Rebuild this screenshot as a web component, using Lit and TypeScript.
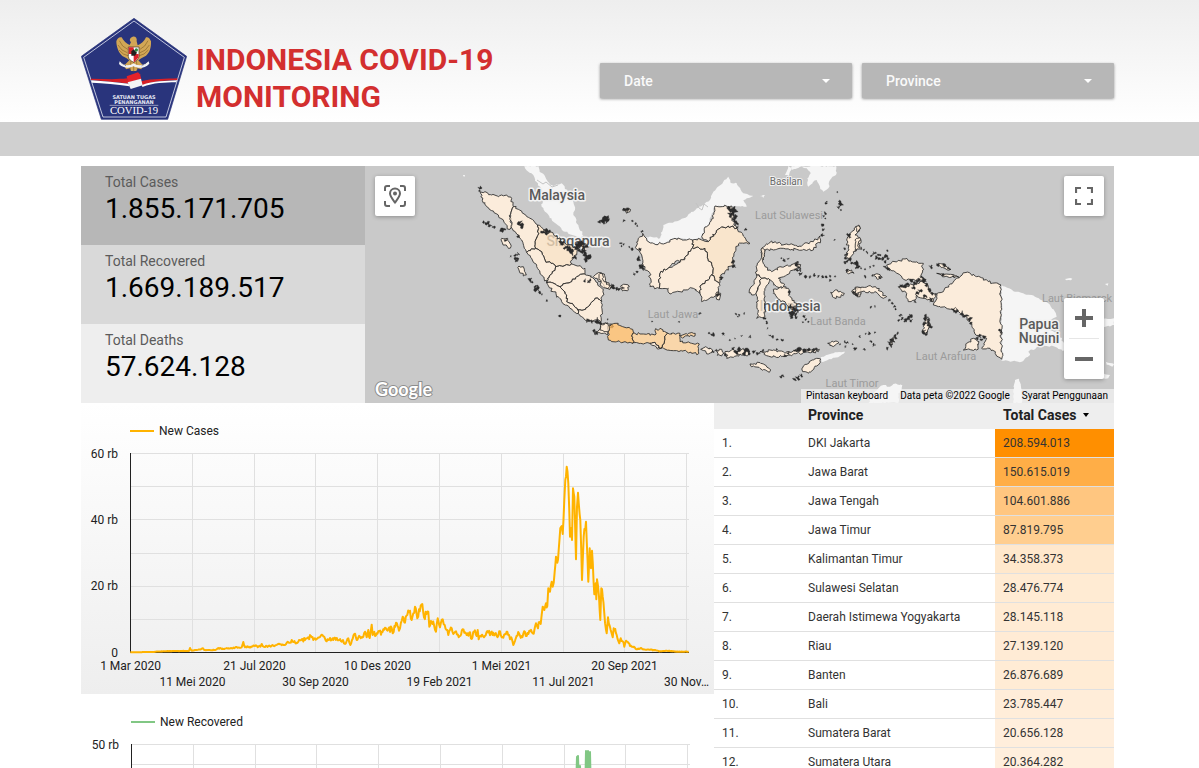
import { LitElement, html, svg, css } from "lit";
import { customElement } from "lit/decorators.js";

type Point = [number, number];

const parse = (source: string): Point[] =>
  source.trim().split(/\s+/).map((pair) => pair.split(",").map(Number) as Point);

const hash = (x: number, y: number): number => {
  const value = Math.sin(x * 12.9898 + y * 78.233) * 43758.5453;
  return value - Math.floor(value) - 0.5;
};

/** Turns a coarse outline into a jagged coastline; shared borders stay shared. */
const coast = (source: string, amount = 8): string => {
  const points = parse(source);
  const out: string[] = [];
  points.forEach(([x1, y1], i) => {
    const [x2, y2] = points[(i + 1) % points.length];
    const steps = Math.max(1, Math.round(Math.hypot(x2 - x1, y2 - y1) / 6));
    for (let s = 0; s < steps; s++) {
      const x = Math.round((x1 + ((x2 - x1) * s) / steps) * 10) / 10;
      const y = Math.round((y1 + ((y2 - y1) * s) / steps) * 10) / 10;
      const k = s === 0 ? 0 : amount;
      out.push(`${(x + hash(x, y) * k).toFixed(1)},${(y + hash(y, x) * k).toFixed(1)}`);
    }
  });
  return `M${out.join("L")}Z`;
};

/** Small islands: "x,y,r" triples become tiny irregular blots. */
const islets = (source: string): string =>
  source.trim().split(/\s+/).map((entry) => {
    const [x, y, r] = entry.split(",").map(Number);
    const pts: string[] = [];
    for (let i = 0; i < 9; i++) {
      const angle = (i / 9) * Math.PI * 2;
      const reach = r * (1 + hash(x + i, y - i) * 1.7);
      pts.push(`${(x + Math.cos(angle) * reach).toFixed(1)},${(y + Math.sin(angle) * reach).toFixed(1)}`);
    }
    return `M${pts.join("L")}Z`;
  }).join("");

interface Province { d: string; tone: string; }
interface Sheet { x: number; foreign: string[]; provinces: Province[]; islets: string; }

const P = "#fce8d2";
const p = (d: string, tone = P): Province => ({ d, tone });

const SHEETS: Sheet[] = [
  {
    x: 365,
    foreign: [
      "478,18 520,18 524,36 538,45 552,68 566,78 590,70 608,95 625,125 630,150 625,165 640,195 655,228 645,235 600,215 565,185 540,155 530,140 535,110 528,85 510,62 505,45 490,35",
      "294,45 300,45 299,50 295,49",
    ],
    provinces: [
      p("345,95 360,95 380,105 400,110 425,105 440,115 445,140 435,165 440,200 432,208 420,190 400,165 380,152 365,140 352,122"),
      p("445,140 460,148 490,172 518,195 522,220 512,240 512,265 485,277 478,265 470,240 455,222 440,205 435,165"),
      p("518,195 545,212 565,222 590,245 610,255 630,262 635,285 620,300 620,312 572,320 558,310 540,300 530,275 512,265 512,240 522,220", "#fadfbd"),
      p("485,277 512,265 530,275 540,300 558,310 572,320 562,340 548,355 545,368 530,345 515,315 500,295"),
      p("572,320 620,312 640,318 660,325 660,343 635,350 620,365 585,380 560,368 545,368 548,355 562,340"),
      p("585,380 620,365 635,350 660,343 690,360 705,380 715,388 710,425 690,415 675,435 655,450 638,450 625,435 605,425 605,405"),
      p("545,368 560,368 585,380 605,405 605,425 625,435 638,450 640,460 615,445 590,425 565,395"),
      p("638,450 655,450 675,435 690,415 710,425 708,485 695,480 680,480 665,487 650,470 640,460"),
      p("707,490 740,492 745,500 728,505 728,525 715,520 695,520 690,515 705,508"),
      p("410,235 428,235 438,260 430,265 412,248"),
      p("462,318 475,320 484,345 475,348 462,330"),
      p("685,350 700,338 718,342 722,365 740,378 735,388 718,382 708,365 690,355"),
    ],
    islets:
      "345,84,4 343,92,3 463,190,7 470,198,6 355,186,3 367,190,5 376,197,5 386,201,4 412,211,5 418,208,3 421,240,3 437,289,2 452,285,4 460,282,4 453,295,5 455,303,3 495,359,5 502,366,3 513,378,5 516,387,6 523,396,4 530,403,2 545,422,2 585,469,4 460,228,4 542,211,4 536,216,6 550,214,4 545,220,4 590,248,6 602,262,6 612,270,7 622,277,6 628,293,5 640,258,8 650,252,9 658,262,8 652,272,7 661,283,6 668,291,7 660,299,5 673,293,4 642,270,5 633,262,6 705,183,6 712,180,5 723,176,7 726,184,5 775,148,3 776,182,3 766,250,2 770,258,2 776,253,2 660,362,4 670,366,4 675,360,3 742,376,4 746,384,4 764,386,4 668,480,5 680,484,4 695,482,6 704,489,4 728,478,2 688,514,6 693,520,4 740,498,4",
  },
  {
    x: 600,
    foreign: [
      "135,230 180,235 190,195 240,180 280,155 330,120 340,95 370,65 385,50 395,70 410,70 430,100 460,108 430,120 440,140 400,138 345,138 320,200 305,230 285,240 225,235 190,252 160,250 140,240",
      "575,18 708,18 708,45 690,60 685,85 670,95 660,80 650,60 625,80 622,55 632,40 620,25 600,20 575,30",
      "555,45 565,18 575,22 566,48",
      "480,108 495,106 490,114", "662,592 700,580 735,575 720,588 665,606",
    ],
    provinces: [
      p("128,220 140,240 160,250 190,252 225,235 260,240 278,240 278,262 265,275 255,295 225,305 205,325 180,340 178,385 150,380 150,340 125,315 125,285 108,265 115,235"),
      p("178,385 180,340 205,325 255,295 265,275 278,262 315,265 325,300 340,325 335,345 325,360 300,378 300,400 280,385 255,390 240,395 210,402 205,385"),
      p("300,378 325,360 335,345 345,362 358,370 358,405 340,412 305,425 300,400"),
      p("278,240 295,235 325,245 360,205 385,198 410,205 415,215 430,228 450,250 415,252 402,280 400,310 375,335 362,345 360,368 345,362 335,345 340,325 325,300 315,265 278,262", "#fadfbd"),
      p("345,138 395,138 400,170 395,180 410,205 385,198 360,205 325,245 305,230 320,200 340,175"),
      p("352,395 362,400 358,420 350,418"),
      p("22,497 45,490 68,500 98,508 98,550 75,545 50,545 25,540", "#fbb65c"),
      p("98,520 130,522 165,525 165,512 180,505 200,518 195,540 182,565 165,547 150,550 130,552 98,550", "#fac888"),
      p("150,550 165,547 182,565 175,567"),
      p("200,518 240,520 240,545 275,550 298,552 295,582 260,575 220,572 182,565 195,540", "#facb90"),
      p("238,525 280,520 285,528 245,532", "#facb90"),
      p("0,492 22,492 28,503 22,515 0,510"),
      p("302,568 320,562 338,570 325,582"),
      p("350,572 365,568 372,580 365,588 352,586"),
      p("375,575 395,570 412,575 430,565 450,575 445,585 420,582 400,592 380,595"),
      p("480,575 520,570 555,580 580,573 620,568 658,568 655,575 610,577 545,590 500,587"),
      p("450,612 480,608 512,630 508,637 480,625 455,620"),
      p("610,618 650,595 662,597 655,615 625,640 608,635"),
      p("485,265 515,243 530,250 600,258 640,245 660,228 662,240 640,270 610,268 530,268 495,270 490,290 490,300"),
      p("485,265 495,270 488,300 495,320 515,335 540,320 565,318 595,305 600,322 580,330 560,345 535,355 550,370 555,385 530,380 510,360 485,355 470,345 472,315 485,285"),
      p("470,345 485,355 475,380 468,400 455,405 448,390 460,375"),
      p("485,355 510,360 505,372 495,385 495,470 470,475 475,450 472,410 468,400 475,380"),
      p("520,388 550,380 565,385 570,410 590,430 588,445 565,440 555,425 535,418 520,400"),
      p("62,378 75,373 88,380 85,390 68,393"),
      p("0,340 8,345 12,365 30,378 24,386 8,382 0,375"),
      p("75,148 86,145 90,155 80,160"),
      p("692,397 712,390 733,400 722,412 700,412"),
      p("738,330 755,330 762,340 745,342"),
      p("683,550 700,546 717,548 705,556 690,557"),
      p("755,215 768,200 780,200 780,212 765,225 780,235 780,260 760,275 750,300 738,290 745,265 740,240"),
      p("755,395 780,382 780,410 765,405"),
    ],
    islets:
      "80,150,5 97,183,2 107,190,3 112,198,2 18,173,6 8,182,4 12,188,3 72,148,2 64,250,2 95,268,3 88,262,2 115,296,5 128,322,6 120,318,3 110,336,3 103,342,3 38,382,4 52,386,4 68,384,4 126,215,3 390,148,6 400,155,8 392,163,6 404,168,6 402,180,6 408,190,5 404,146,5 412,203,3 437,208,3 399,307,4 402,318,4 355,405,4 363,353,4 120,268,3 407,463,3 418,465,3 432,461,2 414,470,2 300,460,3 156,484,2 237,485,2 328,520,3 338,524,4 370,523,3 340,575,3 349,570,3 390,540,2 405,536,2 425,528,2 450,530,3 415,570,6 408,578,6 432,580,5 440,572,5 447,582,4 462,576,4 380,585,4 400,565,3 475,580,4 490,570,3 530,568,3 585,572,4 598,570,5 612,572,5 625,568,4 640,572,4 650,566,3 565,580,4 555,588,4 548,647,4 542,650,3 585,658,5 594,653,5 603,646,4 510,527,3 518,531,3 532,538,3 546,541,3 500,488,3 503,505,2 495,476,4 545,295,3 553,300,3 564,297,3 590,310,6 596,322,5 600,330,4 588,330,4 602,342,4 617,350,3 630,350,3 642,346,4 655,348,3 668,350,3 680,350,3 690,348,3 690,360,3 705,349,2 568,398,4 572,440,6 582,448,7 574,458,6 585,462,5 592,452,4 575,470,4 590,472,3 612,470,3 618,478,3 625,485,2 608,487,2 678,130,3 680,125,2 675,160,3 672,168,3 677,176,2 668,195,3 670,208,3 667,226,4 712,96,2 718,124,4 722,135,5 716,142,4 722,150,3 704,240,2 745,225,4 750,232,3 735,266,3 740,285,4 736,296,4 742,304,6 750,298,4 757,308,4 735,308,3 768,310,4 742,332,4 760,398,4 766,402,4 770,386,4 770,322,3 735,545,3 742,547,3 737,560,3 765,567,3 758,553,2 720,553,2",
  },
  {
    x: 855,
    foreign: [
      "440,375 480,395 540,410 580,430 600,455 605,470 570,490 575,505 610,520 625,545 650,570 680,585 640,578 600,560 575,558 545,562 520,575 525,585 500,605 440,602",
      "745,476 777,475 777,495 745,502", "630,357 652,356 648,361 634,361", "750,372 760,370 758,377",
      "752,605 777,612 772,620 755,614", "740,640 765,645 760,655 742,655",
      "475,690 480,660 492,656 500,690 500,729 475,729", "60,695 85,675 105,680 115,672 142,676 140,688 130,700 130,729 40,729",
    ],
    provinces: [
      p("95,315 120,305 150,297 205,310 200,350 205,360 175,358 150,360 135,345 120,335 100,325"),
      p("130,380 175,375 195,365 215,370 222,395 240,402 235,425 210,415 185,405 180,420 160,425 155,400 140,390"),
      p("240,402 265,395 300,360 315,350 330,338 365,350 400,365 438,375 438,410 438,510 440,598 405,565 380,565 395,535 360,522 350,490 325,465 290,448 235,435 245,410"),
      p("325,570 335,550 355,535 372,545 365,570"),
      p("0,382 40,378 65,385 95,410 85,415 60,395 20,395 0,400"),
      p("2,200 12,195 18,205 8,216"), p("0,240 14,232 18,240 8,258 20,268 0,272"),
      p("55,345 75,344 82,352 65,356"), p("205,500 215,475 225,490 218,515 207,522"),
      p("105,540 118,530 118,545 105,555"), p("245,312 255,310 288,328 270,325"), p("245,340 300,347 312,352 270,350"),
    ],
    islets:
      "26,270,3 37,277,3 48,288,3 58,280,4 64,292,4 75,285,5 84,294,6 95,290,5 100,297,3 92,303,4 75,297,4 97,272,2 92,322,5 100,328,5 3,312,5 10,320,4 18,325,2 30,328,2 46,322,2 56,318,2 30,350,3 52,346,3 75,352,3 4,308,4 170,362,5 180,370,6 190,362,5 160,374,5 150,380,5 137,378,4 200,352,4 210,362,5 215,375,4 222,388,5 230,400,4 195,392,5 185,398,5 175,385,4 228,320,4 250,313,4 266,316,4 280,325,3 265,345,3 295,350,3 8,405,4 104,420,3 112,430,3 118,440,3 122,447,2 48,440,3 60,440,2 135,466,4 132,480,3 142,476,3 150,482,5 158,475,6 166,468,4 168,482,4 212,472,6 220,490,6 208,490,5 225,500,5 206,515,6 216,520,5 222,480,4 128,520,4 120,530,5 112,540,6 104,548,5 96,564,4 108,556,4 60,517,2 43,520,3 32,522,2 14,530,3 48,545,3 56,555,4 28,567,3 2,567,3 295,448,6 308,452,6 320,462,6 332,468,6 345,480,6 348,490,4 372,528,5 388,534,5 380,540,4 365,535,4 180,425,3 435,512,5 437,518,3 210,408,5 228,420,5",
  },
];

const sheetAt = (x: number) => `translate(${x} 160) scale(0.333333)`;

interface Label { text: string; x: number; y: number; kind: string; }
const LABELS: Label[] = [
  { text: "Malaysia", x: 557, y: 200, kind: "country" },
  { text: "Singapura", x: 578, y: 246, kind: "country" },
  { text: "Indonesia", x: 790, y: 311, kind: "country" },
  { text: "Papua", x: 1039, y: 329, kind: "country" },
  { text: "Nugini", x: 1039, y: 343, kind: "country" },
  { text: "Basilan", x: 786, y: 185, kind: "place" },
  { text: "Laut Sulawesi", x: 789, y: 219, kind: "sea" },
  { text: "Laut Jawa", x: 673, y: 318, kind: "sea" },
  { text: "Laut Banda", x: 838, y: 325, kind: "sea" },
  { text: "Laut Timor", x: 852, y: 387, kind: "sea" },
  { text: "Laut Arafura", x: 946, y: 360, kind: "sea" },
  { text: "Laut Bismarck", x: 1077, y: 302, kind: "sea" },
];

const EARLY =
  "166,757 230,756 260,754 300,753 342,753 345,744 350,752 378,748 384,745 388,750 420,750 430,744 440,747 460,745 480,743 500,742 505,726 510,742 525,740 540,738 556,740 560,732 566,740 580,738 600,737 615,733 630,735 638,725 645,728 650,720 656,726 665,728 672,720 680,718 690,720 700,712 710,712 720,715 735,711 745,709 750,716 755,724 765,714 775,720 785,714 793,720 800,725 804,720 810,732 820,715 826,735 838,702 845,720 855,710 865,710 870,695 875,712 880,690 884,714 890,674 893,705 905,700 910,694 918,704 925,688 932,684 938,692 950,684 956,696 963,668 972,692";
const LATE =
  "0,685 8,650 15,668 22,645 30,632 35,660 40,640 45,620 52,655 57,628 67,612 72,652 85,635 88,680 95,665 102,675 108,695 113,655 120,682 128,658 134,675 145,705 150,690 155,685 160,702 168,694 176,712 188,688 200,705 208,698 215,717 222,695 230,708 233,690 236,718 246,704 252,712 262,693 270,706 280,698 290,708 300,694 305,712 315,702 322,695 330,718 334,712 340,735 350,707 357,700 365,708 375,696 380,708 388,692 398,700 404,685 408,670 414,685 418,668 422,672 428,620 433,630 438,610 442,618 445,565 450,575 455,545 458,560 464,515 468,470 472,488 476,450 481,385 485,378 488,402 493,300 496,240 500,200 505,250 510,410 513,385 516,420 519,265 523,290 528,478 531,320 534,278 541,360 546,540 551,410 558,365 565,545 569,445 573,505 576,452 583,583 587,550 589,598 591,538 597,590 601,660 604,565 608,590 613,640 620,700 624,652 632,690 638,712 641,685 650,705 658,730 662,715 668,724 673,740 678,722 690,738 697,740 712,748 722,744 730,748 760,750 780,754 800,752 830,755 866,755";

/** Daily values between the listed ones wobble in proportion to their height. */
const trace = (source: string, left: number): string => {
  const points = parse(source);
  const out: string[] = [];
  points.forEach(([x, y], i) => {
    out.push(`${(left + x / 3).toFixed(1)},${(400 + y / 3).toFixed(1)}`);
    const next = points[i + 1];
    if (!next || next[0] - x < 4) return;
    const steps = Math.round((next[0] - x) / 2.5);
    const swing = Math.min(22, (757 - y) * 0.3);
    for (let s = 1; s < steps; s++) {
      const px = x + ((next[0] - x) * s) / steps;
      const py = y + ((next[1] - y) * s) / steps + hash(px, y) * swing;
      out.push(`${(left + px / 3).toFixed(1)},${(400 + Math.min(757, py) / 3).toFixed(1)}`);
    }
  });
  return out.join(" ");
};

const CASES_LINE = `${trace(EARLY, 75)} ${trace(LATE, 400)}`;
const RECOVERED_LINE =
  "132,943 260,941 330,936 400,925 440,915 500,922 545,900 560,860 570,820 576,790 577,757 578,756 579,790 580,766 581,800 585,800 586,751 587,790 588,751 589,790 590,752 591,800 596,830 604,880 620,925 640,938 689,943";

const COLUMNS = [192.5, 254.5, 315.5, 377.5, 439.5, 501.5, 563.5, 624.5, 686.5];
const DATES = ["1 Mar 2020", "11 Mei 2020", "21 Jul 2020", "30 Sep 2020", "10 Des 2020", "19 Feb 2021", "1 Mei 2021", "11 Jul 2021", "20 Sep 2021", "30 Nov…"];

const STATS = [
  { label: "Total Cases", value: "1.855.171.705", tone: "dark" },
  { label: "Total Recovered", value: "1.669.189.517", tone: "mid" },
  { label: "Total Deaths", value: "57.624.128", tone: "light" },
];

const ROWS: [string, string, string][] = [
  ["DKI Jakarta", "208.594.013", "#ff8f00"],
  ["Jawa Barat", "150.615.019", "#ffae47"],
  ["Jawa Tengah", "104.601.886", "#ffc680"],
  ["Jawa Timur", "87.819.795", "#ffce8f"],
  ["Kalimantan Timur", "34.358.373", "#ffe8cc"],
  ["Sulawesi Selatan", "28.476.774", "#ffebd3"],
  ["Daerah Istimewa Yogyakarta", "28.145.118", "#ffebd4"],
  ["Riau", "27.139.120", "#ffebd5"],
  ["Banten", "26.876.689", "#ffecd5"],
  ["Bali", "23.785.447", "#ffedd9"],
  ["Sumatera Barat", "20.656.128", "#ffeedc"],
  ["Sumatera Utara", "20.364.282", "#ffefdd"],
];

@customElement("app-root")
export class AppRoot extends LitElement {
  static styles = css`
    :host { display: block; height: 100vh; overflow-y: auto; scrollbar-width: none; background: #fff; color: #212121; font-family: Roboto, sans-serif; }
    * { box-sizing: border-box; }
    h1, p, dl, dd, dt { margin: 0; }
    button, select { font: inherit; border: 0; }
    .header { display: grid; grid-template-columns: minmax(0, 1fr) 514px; align-items: end; min-height: 122px; padding: 18px 85px 2px 81px; background: linear-gradient(#eeeeee, #fff); }
    .brand { display: flex; align-items: center; gap: 9px; }
    .logo { flex: none; display: block; width: 106px; height: 102px; }
    .title { max-width: 310px; padding-top: 17px; color: #d32f2f; font-size: 30px; line-height: 37px; font-weight: 700; }
    .filters { display: grid; grid-template-columns: 1fr 1fr; gap: 10px; padding-bottom: 22px; }
    .filter { display: grid; align-items: center; }
    .filter > * { grid-area: 1 / 1; }
    .select { appearance: none; width: 100%; height: 35px; padding: 0 24px; border-radius: 1px; background: #b7b7b7; color: #fafafa; font-size: 14px; font-weight: 500; box-shadow: 0 1px 3px rgba(0, 0, 0, 0.4); }
    .caret { justify-self: end; width: 8px; height: 4px; margin-right: 22px; fill: #fff; pointer-events: none; }
    .strip { height: 34px; background: #d0d0d0; }
    .main { padding: 10px 85px 0 81px; }
    .top { display: grid; grid-template-columns: 284fr 749fr; }
    .bottom { display: grid; grid-template-columns: 633fr 400fr; align-items: start; }
    .stat { height: 79px; padding: 8px 24px; }
    .dark { background: #b7b7b7; }
    .mid { background: #d9d9d9; }
    .light { background: #eeeeee; }
    .stat-label { color: #5b5b5b; font-size: 14px; line-height: 16px; }
    .stat-value { color: #000; font-size: 28px; line-height: 38px; }
    .map { position: relative; overflow: hidden; background: #c9c9c9; }
    .map-canvas { position: absolute; inset: 0; width: 100%; height: 100%; }
    .country { font-size: 14px; font-weight: 500; fill: #5a5a5a; stroke: #f2f2f2; stroke-width: 3px; }
    .place { font-size: 10px; fill: #6a6a6a; stroke: #f2f2f2; stroke-width: 2px; }
    .sea { font-size: 11px; fill: #9b9b9b; }
    .label { paint-order: stroke; stroke-linejoin: round; text-anchor: middle; }
    .foreign { fill: #f5f5f5; }
    .border { stroke: #2b2b2b; stroke-width: 2.6; stroke-linejoin: round; fill-opacity: 0.75; }
    .islets { fill: #2b2b2b; stroke: #2b2b2b; stroke-width: 1; }
    .control { position: absolute; display: grid; place-items: center; width: 40px; height: 40px; padding: 0; border-radius: 2px; background: #fff; box-shadow: 0 1px 4px rgba(0, 0, 0, 0.3); }
    .locate { top: 10px; left: 10px; }
    .full { top: 10px; right: 10px; }
    .zoom { position: absolute; right: 10px; bottom: 24px; width: 40px; border-radius: 2px; background: #fff; box-shadow: 0 1px 4px rgba(0, 0, 0, 0.3); }
    .zoom-button { display: grid; place-items: center; width: 40px; height: 40px; padding: 0; background: none; }
    .zoom-rule { height: 1px; margin: 0 5px; background: #e6e6e6; }
    .glyph { display: block; fill: none; stroke: #666; }
    .google { position: absolute; left: 10px; bottom: 3px; font-family: Lato, sans-serif; font-size: 18px; line-height: 22px; font-weight: 700; color: #fff; -webkit-text-stroke: 2px #8d8d8d; paint-order: stroke; }
    .credits { position: absolute; right: 0; bottom: 0; display: flex; gap: 12px; height: 14px; padding: 0 6px 0 5px; background: rgba(245, 245, 245, 0.7); font-size: 10px; line-height: 14px; color: #000; }
    .credit { padding: 0; background: none; color: #000; text-decoration: none; line-height: 14px; }
    .chart { display: block; width: 100%; height: auto; font-size: 12px; }
    .first { background: linear-gradient(#fff, #eeeeee); }
    .grid { fill: none; stroke: #e0e0e0; }
    .axis { fill: none; stroke: #212121; }
    .tick { fill: #212121; }
    .middle { text-anchor: middle; }
    .end { text-anchor: end; }
    .series { fill: none; stroke-width: 2; stroke-linejoin: round; }
    .cases { stroke: #ffb300; }
    .recovered { stroke: #81c784; }
    .table { width: 100%; table-layout: fixed; border-collapse: separate; border-spacing: 0; font-size: 12px; }
    .index { width: 21.5%; }
    .total { width: 29.75%; }
    .head { height: 26px; padding: 0 8px 2px; background: #eeeeee; text-align: left; font-size: 14px; font-weight: 700; white-space: nowrap; }
    .sort { display: inline-flex; align-items: center; gap: 7px; padding: 0; background: none; color: inherit; }
    .sort-arrow { width: 6px; height: 4px; }
    .cell { height: 29px; padding: 0 8px; border-bottom: 1px solid #e0e0e0; color: #333; white-space: nowrap; }
  `;

  private logo() {
    return html`<svg class="logo" viewBox="33 24 318 306" role="img" aria-label="Satuan Tugas Penanganan COVID-19">
      <path d="M192 25L350 139L293 328H94L34 139Z" fill="#29347c" stroke="#29347c" stroke-width="2" />
      <path d="M192 33L343 142L288 321H99L41 142Z" fill="none" stroke="#dfe2f0" stroke-width="2.5" />
      <path d="M62 206C100 207 140 209 172 205L176 221C140 217 100 213 64 211Z" fill="#d62027" />
      <path d="M64 211C100 214 140 217 176 221L178 229C140 222 100 220 66 218Z" fill="#fff" />
      <path d="M213 214C250 205 290 207 322 205V211C288 211 250 213 216 226Z" fill="#d62027" />
      <path d="M216 225C250 213 290 213 322 211L318 217C285 218 250 218 217 231Z" fill="#fff" />
      <path d="M170 199L204 187L210 193L214 207L174 218Z" fill="#e4222a" />
      <path d="M173 217L213 206L218 226L182 237Z" fill="#f4f4f4" />
      <path d="M188 80C179 83 177 91 183 96L179 105C170 102 160 93 155 82C147 80 141 86 139 94C139 110 145 128 157 138L170 145L178 151L163 166L168 178L180 175L183 183H199L203 175L214 178L219 166L205 151L214 145L228 137C240 128 244 110 243 94C240 85 234 80 228 82C223 94 213 102 203 106L200 94C202 84 197 79 188 80Z" fill="#d2a655" />
      <path d="M148 92L158 108L173 118M144 105L156 120L172 128M147 120L160 132L174 137M234 92L224 108L210 118M238 105L226 120L210 128M235 120L222 132L208 137M183 152L180 180M191 155V184M199 152L202 178" fill="none" stroke="#8a652a" stroke-width="2" />
      <path d="M175 111H207V140C205 149 197 154 191 157C183 153 176 148 175 140Z" fill="#fff" stroke="#3f301c" stroke-width="2" />
      <path d="M176 112H191V132H176ZM191 132H206V142L194 155L191 156Z" fill="#d9232b" />
      <path d="M184 124L191 118L201 128L195 137L184 137Z" fill="#20201e" />
      <circle cx="199" cy="120" r="5" fill="#2f8a43" />
      <path d="M149 154C160 168 180 169 191 160C202 169 222 168 236 154L238 161C224 176 203 176 191 169C178 176 159 175 147 162Z" fill="#f2f2f2" />
      <path d="M155 160L170 168M228 160L214 168" stroke="#44475c" stroke-width="2.5" stroke-dasharray="3 3" />
      <text x="192" y="266" text-anchor="middle" fill="#e6e8f4" font-family="DejaVu Sans, sans-serif" font-size="15" font-weight="700"><tspan>SATUAN TUGAS</tspan><tspan x="192" y="282">PENANGANAN</tspan></text>
      <path d="M119 286H265" stroke="#fff" stroke-width="1.5" />
      <text x="192" y="312" text-anchor="middle" fill="#fff" font-family="Liberation Serif, serif" font-size="32">COVID-19</text>
    </svg>`;
  }

  private filter(name: string) {
    return html`<div class="filter">
      <select class="select" aria-label=${name}><option>${name}</option></select>
      <svg class="caret" viewBox="0 0 8 4" aria-hidden="true"><path d="M0 0H8L4 4Z" /></svg>
    </div>`;
  }

  private map() {
    return html`<section class="map" aria-label="Peta Indonesia">
      <svg class="map-canvas" viewBox="365 166 749 237" preserveAspectRatio="xMidYMid slice">
        ${SHEETS.map((s) => svg`<g class="foreign" transform=${sheetAt(s.x)}>
          ${s.foreign.map((d) => svg`<path d=${coast(d, 5)} />`)}
          ${s.provinces.map(({ d }) => svg`<path d=${coast(d)} />`)}
        </g>`)}
        <path d="M537 180L543 184L546 182L552 187L558 185M696 203L699 208L702 210L704 204L708 207" fill="none" stroke="#c3c3c3" />
        ${LABELS.map((l) => svg`<text class="label ${l.kind}" x=${l.x} y=${l.y}>${l.text}</text>`)}
        ${SHEETS.map((s) => svg`<g transform=${sheetAt(s.x)}>
          ${s.provinces.map(({ d, tone }) => svg`<path class="border" d=${coast(d)} fill=${tone} />`)}
          <path class="islets" d=${islets(s.islets)} />
        </g>`)}
      </svg>
      <button class="control locate" aria-label="Atur ulang tampilan">
        <svg class="glyph" width="24" height="24" viewBox="0 0 24 24" stroke-width="2">
          <path d="M2 7V4Q2 2 4 2H7M17 2H20Q22 2 22 4V7M22 17V20Q22 22 20 22H17M7 22H4Q2 22 2 20V17" />
          <path d="M12 18.5C9 14.5 7 12 7 9.500A5 5 0 0 1 17 9.500C17 12 15 14.500 12 18.500Z" />
          <circle cx="12" cy="9.500" r="1" />
        </svg>
      </button>
      <button class="control full" aria-label="Layar penuh">
        <svg class="glyph" width="18" height="18" viewBox="0 0 18 18" stroke-width="2.200"><path d="M1 6V1H6M12 1H17V6M17 12V17H12M6 17H1V12" /></svg>
      </button>
      <div class="zoom">
        <button class="zoom-button" aria-label="Perbesar"><svg class="glyph" width="18" height="18" viewBox="0 0 18 18" stroke-width="4"><path d="M9 0V18M0 9H18" /></svg></button>
        <div class="zoom-rule"></div>
        <button class="zoom-button" aria-label="Perkecil"><svg class="glyph" width="18" height="18" viewBox="0 0 18 18" stroke-width="4"><path d="M0 9H18" /></svg></button>
      </div>
      <span class="google">Google</span>
      <div class="credits">
        <button class="credit">Pintasan keyboard</button>
        <span>Data peta ©2022 Google</span>
        <a class="credit" href="#">Syarat Penggunaan</a>
      </div>
    </section>`;
  }

  private casesChart() {
    return html`<svg class="chart first" viewBox="81 403 633 291" role="img" aria-label="New Cases">
      <path class="series cases" d="M130 431H154" /><text class="tick" x="159" y="435">New Cases</text>
      <path class="grid" d=${COLUMNS.map((x) => `M${x} 453V652`).join("") + [453.5, 486.5, 519.5, 553.5, 586.5, 619.5].map((y) => `M131 ${y}H689`).join("")} />
      <path class="axis" d="M130.5 453V652.5H689" />
      ${["60 rb", "40 rb", "20 rb", "0"].map((t, i) => svg`<text class="tick end" x="118" y=${458 + i * 66 + (i === 3 ? 1 : 0)}>${t}</text>`)}
      ${DATES.map((t, i) => svg`<text class="tick middle" x=${[130.5, ...COLUMNS][i]} y=${i % 2 ? 686 : 670}>${t}</text>`)}
      <polyline class="series cases" points=${CASES_LINE} />
    </svg>`;
  }

  private recoveredChart() {
    return html`<svg class="chart" viewBox="81 694 633 291" role="img" aria-label="New Recovered">
      <path class="series recovered" d="M131 722H155" /><text class="tick" x="160" y="726">New Recovered</text>
      <path class="grid" d=${COLUMNS.map((x) => `M${x + 1} 744V943`).join("") + [744.5, 764.5, 784.5, 804.5, 824.5, 844.5, 864.5, 884.5, 904.5, 924.5].map((y) => `M132 ${y}H690`).join("")} />
      <path class="axis" d="M131.5 744V943.5H690" />
      <text class="tick end" x="119" y="749">50 rb</text>
      <polyline class="series recovered" points=${RECOVERED_LINE} />
    </svg>`;
  }

  render() {
    return html`
      <header class="header">
        <div class="brand">${this.logo()}<h1 class="title">INDONESIA COVID-19 MONITORING</h1></div>
        <div class="filters">${this.filter("Date")}${this.filter("Province")}</div>
      </header>
      <div class="strip"></div>
      <main class="main">
        <div class="top">
          <dl class="stats">
            ${STATS.map((s) => html`<div class="stat ${s.tone}"><dt class="stat-label">${s.label}</dt><dd class="stat-value">${s.value}</dd></div>`)}
          </dl>
          ${this.map()}
        </div>
        <div class="bottom">
          <div>${this.casesChart()}${this.recoveredChart()}</div>
          <table class="table">
            <thead><tr>
              <th class="head index" scope="col"></th>
              <th class="head" scope="col">Province</th>
              <th class="head total" scope="col"><button class="sort">Total Cases<svg class="sort-arrow" viewBox="0 0 6 4" aria-hidden="true"><path d="M0 0H6L3 4Z" /></svg></button></th>
            </tr></thead>
            <tbody>
              ${ROWS.map(([name, total, tone], i) => html`<tr>
                <td class="cell">${i + 1}.</td><td class="cell">${name}</td><td class="cell" style="background-color:${tone}">${total}</td>
              </tr>`)}
            </tbody>
          </table>
        </div>
      </main>`;
  }
}
